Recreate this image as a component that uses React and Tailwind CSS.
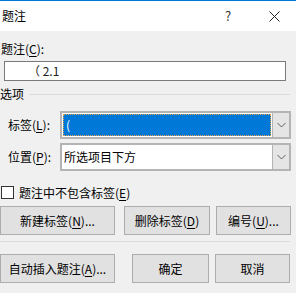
import React from "react";

const FONT = { fontFamily: '"Noto Sans CJK SC", "Noto Sans", sans-serif' };

const Key = ({ children }) => <span className="underline underline-offset-[2px]">{children}</span>;

const Chevron = () => (
  <svg width="9" height="6" viewBox="0 0 9 6" fill="none">
    <path d="M0.5 1 L4.5 5 L8.5 1" stroke="#606060" strokeWidth="1" />
  </svg>
);

const Button = ({ className, children }) => (
  <div
    className={`h-[29px] flex items-center justify-center bg-[#e1e1e1] border border-[#adadad] text-[12px] text-black ${className}`}
  >
    {children}
  </div>
);

const Combo = ({ selected, children }) => (
  <div className="flex h-[28px] w-[231px] border-2 border-[#b4b4b4] bg-white">
    <div className="flex-1 p-[1px] flex">
      {selected ? (
        <div className="flex-1 bg-[#0078d7] border border-dotted border-[#e9a24c] text-white text-[12px] leading-[20px] pl-[2px]">
          {children}
        </div>
      ) : (
        <div className="flex-1 text-[12px] leading-[22px] pl-[1px] text-black">{children}</div>
      )}
    </div>
    <div className="w-[17px] flex items-center justify-center bg-[#e5e5e5] border-l border-[#b4b4b4]">
      <Chevron />
    </div>
  </div>
);

export default function App() {
  return (
    <div className="w-[296px] h-[293px] overflow-hidden flex flex-col bg-[#f0f0f0] text-black" style={FONT}>
      <div className="h-px bg-[#0078d7]" />
      <div className="h-[30px] bg-white flex items-center relative">
        <span className="pl-[2px] text-[12px]">题注</span>
        <span className="absolute left-[225px] top-[7px] text-[13px] leading-[16px] text-[#333]">?</span>
        <svg className="absolute left-[269px] top-[10px]" width="11" height="11" viewBox="0 0 11 11">
          <path d="M0.5 0.5 L10.5 10.5 M10.5 0.5 L0.5 10.5" stroke="#222" strokeWidth="1" />
        </svg>
      </div>

      <div className="flex flex-col">
        <div className="mt-[10px] h-[16px] text-[12px] leading-[16px] pl-[1px]">
          题注(<Key>C</Key>):
        </div>
        <div className="mt-[4px] ml-[4px] w-[282px] h-[20px] border border-[#7a7a7a] bg-white text-[12px] leading-[18px] pl-[23px] text-[#222]">
          （ 2.1
        </div>
        <div className="mt-[5px] h-[16px] flex items-center">
          <span className="text-[12px] leading-[16px]">选项</span>
          <div className="ml-[5px] w-[261px] h-px bg-[#dcdcdc]" />
        </div>

        <div className="mt-[9px] flex items-center">
          <span className="pl-[8px] w-[60px] text-[12px]">
            标签(<Key>L</Key>):
          </span>
          <Combo selected>(</Combo>
        </div>
        <div className="mt-[4px] flex items-center">
          <span className="pl-[8px] w-[60px] text-[12px]">
            位置(<Key>P</Key>):
          </span>
          <Combo>所选项目下方</Combo>
        </div>

        <div className="mt-[15px] h-[13px] flex items-center">
          <div className="ml-[1px] w-[13px] h-[13px] border border-[#333] bg-white" />
          <span className="ml-[5px] text-[12px] leading-[16px]">
            题注中不包含标签(<Key>E</Key>)
          </span>
        </div>

        <div className="mt-[7px] flex">
          <Button className="w-[115px]">
            新建标签(<Key>N</Key>)...
          </Button>
          <Button className="ml-[9px] w-[86px]">
            删除标签(<Key>D</Key>)
          </Button>
          <Button className="ml-[6px] w-[75px]">
            编号(<Key>U</Key>)...
          </Button>
        </div>

        <div className="mt-[6px] w-[290px] h-px bg-[#dcdcdc]" />

        <div className="mt-[12px] flex">
          <Button className="w-[115px]">
            自动插入题注(<Key>A</Key>)...
          </Button>
          <Button className="ml-[17px] w-[77px]">确定</Button>
          <Button className="ml-[6px] w-[75px]">取消</Button>
        </div>
      </div>
    </div>
  );
}
